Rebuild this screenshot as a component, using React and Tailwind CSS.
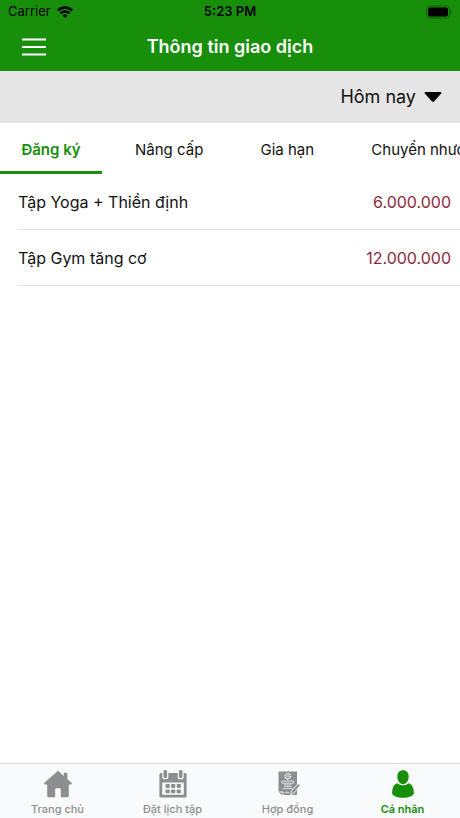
import { useState } from "react";

const tabs = ["Đăng ký", "Nâng cấp", "Gia hạn", "Chuyển nhượng"];

const transactions = [
  { id: 1, name: "Tập Yoga + Thiền định", amount: "6.000.000" },
  { id: 2, name: "Tập Gym tăng cơ", amount: "12.000.000" },
];

const HomeIcon = () => (
  <svg viewBox="0 0 28 28" className="size-7" fill="currentColor">
    <path d="M14 0.800 0.500 12.800c-.7.7-.4 1.600.6 1.600H3.200v11.300c0 1 .5 1.600 1.500 1.600h5.400c.7 0 1.100-.4 1.100-1.100v-6.500c0-.9.5-1.400 1.400-1.400h2.800c.9 0 1.400.5 1.400 1.400v6.500c0 .7.400 1.100 1.100 1.100h5.400c1 0 1.500-.6 1.500-1.600V14.400h2.100c1 0 1.300-.9.6-1.600L23.400 9V2.800h-3.600v3.200L14 .8Z" />
  </svg>
);

const CalendarIcon = () => (
  <svg viewBox="0 0 28 28" className="size-7" fill="currentColor">
    <rect x="4.500" y="0" width="3.600" height="8" rx="1.500" />
    <rect x="19.900" y="0" width="3.600" height="8" rx="1.500" />
    <path
      fillRule="evenodd"
      d="M2 3h1.300v4.200c0 1.200.9 2.100 2.100 2.100h1.800c1.200 0 2.100-.9 2.100-2.100V3h9.400v4.200c0 1.200.9 2.100 2.100 2.100h1.800c1.200 0 2.100-.9 2.100-2.100V3H26c.9 0 1.600.7 1.600 1.600v21.300c0 .9-.7 1.600-1.600 1.600H2c-.9 0-1.600-.7-1.600-1.600V4.600C.4 3.700 1.100 3 2 3Zm1.200 9.600v12.100h21.600V12.600H3.200Z"
    />
    {[6.5, 12.1, 17.7].map((x) => (
      <g key={x}>
        <rect x={x} y="14" width="4.200" height="3.900" rx="0.800" />
        <rect x={x} y="19.400" width="4.200" height="3.900" rx="0.800" />
      </g>
    ))}
  </svg>
);

const ContractIcon = () => (
  <svg viewBox="0 0 28 28" className="size-7">
    <path d="M4.500 1.500h18.500v23.500H8l-3.500-3Z" fill="currentColor" />
    <g fill="none" stroke="#f9fafb">
      <circle cx="13.800" cy="6.300" r="2.700" strokeWidth="1.300" strokeDasharray="1.500 0.500" />
      <circle cx="13.800" cy="6.300" r="0.900" strokeWidth="0.700" />
      <rect x="7.800" y="11" width="12" height="2.200" rx="0.600" strokeWidth="0.800" />
      <path d="M10 14.900h7.600M10 16.600h7.600M8.500 18.600h10.500" strokeWidth="0.700" />
      <path d="M4.500 22h4.500v3M11 23l2-1 2 1" strokeWidth="0.900" />
    </g>
    <path
      d="m24.200 13.600 2 1.600-6 7.600-3.600 2 1-3.900Z"
      fill="currentColor"
      stroke="#f9fafb"
      strokeWidth="0.900"
    />
  </svg>
);

const UserIcon = () => (
  <svg viewBox="0 0 28 28" className="size-7" fill="currentColor">
    <path d="M14 .2c3.400 0 5.700 2.400 5.700 6.200 0 4.300-2.500 7.700-5.700 7.700s-5.700-3.400-5.700-7.700C8.300 2.600 10.600.2 14 .2Z" />
    <path d="M8.300 13.300c1.400 1.300 3.300 2 5.700 2s4.300-.7 5.700-2c3.600 1.100 5 4.600 5.200 9.500 0 1.300-.4 2-1.400 2.600-2.600 1.600-5.900 2.300-9.500 2.300s-6.900-.7-9.500-2.300c-1-.6-1.400-1.300-1.400-2.600.2-4.900 1.600-8.400 5.200-9.500Z" />
  </svg>
);

const navItems = [
  { label: "Trang chủ", icon: HomeIcon },
  { label: "Đặt lịch tập", icon: CalendarIcon },
  { label: "Hợp đồng", icon: ContractIcon },
  { label: "Cá nhân", icon: UserIcon, active: true },
];

const StatusBar = () => (
  <div className="grid grid-cols-3 items-center h-6 px-2 text-[13px] text-black">
    <div className="flex items-center gap-1.5">
      <span>Carrier</span>
      <svg viewBox="0 0 16 12" className="w-4 h-3" fill="none" stroke="currentColor">
        <path d="M.8 4.500a10.300 10.300 0 0 1 14.400 0" strokeWidth="2.500" />
        <path d="M3.400 7.400a6.500 6.500 0 0 1 9.200 0" strokeWidth="2.300" />
        <path d="M8 12 5.500 9.500a3.500 3.500 0 0 1 5 0Z" fill="currentColor" stroke="none" />
      </svg>
    </div>
    <span className="text-center font-semibold">5:23 PM</span>
    <svg viewBox="0 0 26 14" className="w-[26px] h-3.5 justify-self-end">
      <rect x="0.500" y="1" width="23" height="12" rx="3.500" fill="none" stroke="#0d5c08" />
      <rect x="2" y="2.500" width="20" height="9" rx="2" />
      <path d="M24.600 5v4c.8-.3 1.200-1.100 1.200-2s-.4-1.700-1.200-2Z" fill="#0d5c08" />
    </svg>
  </div>
);

const Header = () => (
  <header className="bg-[#188f0a]">
    <StatusBar />
    <div className="grid grid-cols-[auto_1fr_auto] items-center h-[47px] px-[22px] pb-0.5">
      <button type="button" aria-label="Menu" className="w-6 text-white">
        <svg viewBox="0 0 24 18" className="w-6" stroke="currentColor" strokeWidth="2">
          <path d="M0 1.500h24M0 9h24M0 16.500h24" />
        </svg>
      </button>
      <h1 className="text-center text-lg font-semibold text-white">
        Thông tin giao dịch
      </h1>
      <span className="w-6" />
    </div>
  </header>
);

const App = () => {
  const [activeTab, setActiveTab] = useState(tabs[0]);

  return (
    <div className="flex flex-col min-h-screen bg-white text-[#111111] font-['Inter',sans-serif]">
      <Header />

      <div className="flex justify-end h-[52px] pr-[18px] bg-[#e5e5e5]">
        <div className="relative flex items-center">
          <select
            aria-label="Thời gian"
            className="appearance-none field-sizing-content h-full pr-[26px] text-lg bg-transparent"
          >
            <option>Hôm nay</option>
          </select>
          <svg
            viewBox="0 0 18 10"
            className="absolute right-0 w-[18px] h-2.5 pointer-events-none"
          >
            <path d="M1.500 0h15c.9 0 1.300.9.7 1.500l-7 7.800c-.7.7-1.700.7-2.400 0l-7-7.800C.2.900.6 0 1.500 0Z" />
          </svg>
        </div>
      </div>

      <div role="tablist" className="flex gap-3 h-[51px] overflow-x-auto overflow-y-hidden [scrollbar-width:none]">
        {tabs.map((tab) => (
          <button
            key={tab}
            type="button"
            role="tab"
            aria-selected={tab === activeTab}
            onClick={() => setActiveTab(tab)}
            className={`shrink-0 min-w-[102px] px-[21px] pt-1.5 border-b-3 text-[15px] whitespace-nowrap ${
              tab === activeTab
                ? "border-[#188f0a] text-[#188f0a] font-semibold"
                : "border-transparent"
            }`}
          >
            {tab}
          </button>
        ))}
      </div>

      <ul className="flex-1">
        {transactions.map((item) => (
          <li
            key={item.id}
            className="flex items-center justify-between h-14 ml-[18px] pr-[9px] border-b border-[#e2e2e2] text-base"
          >
            <span>{item.name}</span>
            <span className="text-[#8c2a3c]">{item.amount}</span>
          </li>
        ))}
      </ul>

      <nav className="grid grid-cols-4 h-[55px] pt-1.5 border-t border-[#d8d8d8] bg-[#f9fafb]">
        {navItems.map(({ label, icon: Icon, active }) => (
          <a
            key={label}
            href="#"
            className={`flex flex-col items-center gap-[3px] text-[11px] leading-4 ${
              active
                ? "text-[#188f0a] font-semibold"
                : "text-[#8e8e90] font-medium"
            }`}
          >
            <Icon />
            {label}
          </a>
        ))}
      </nav>
    </div>
  );
};

export default App;
